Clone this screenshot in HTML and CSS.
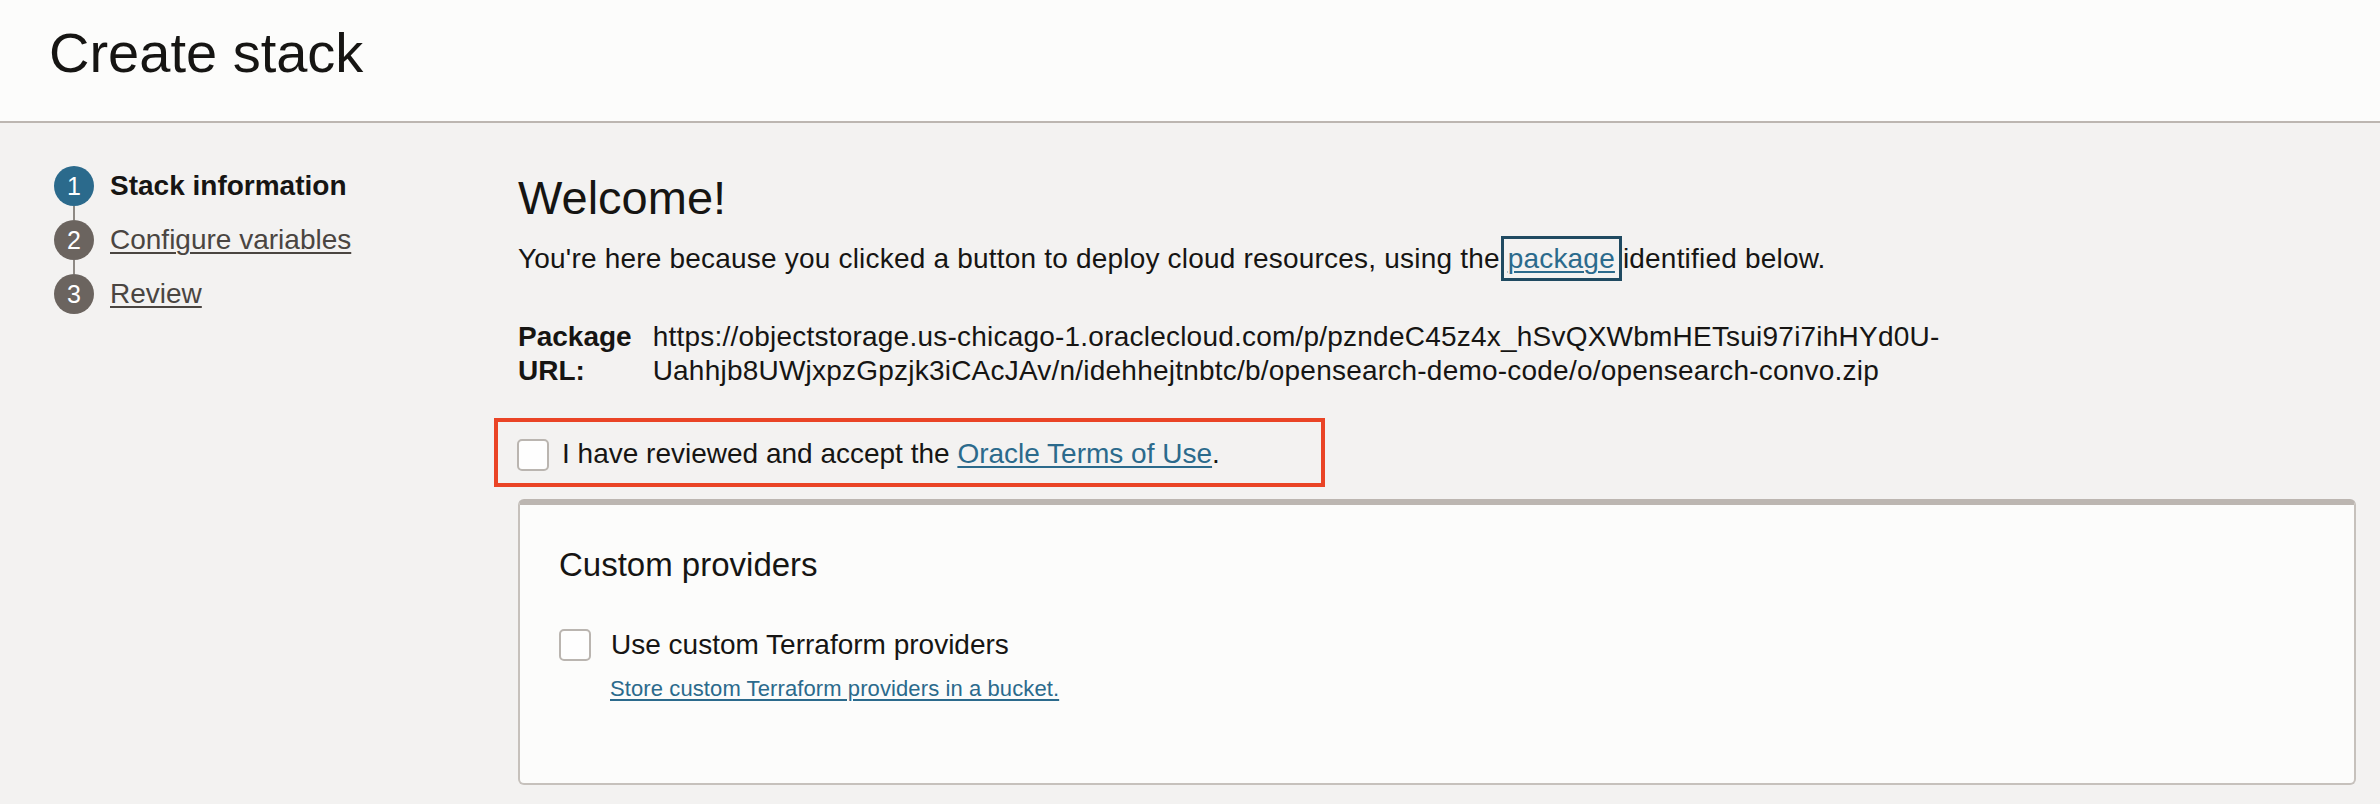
FILE: index.html
```html
<!DOCTYPE html>
<html lang="en">
<head>
<meta charset="utf-8">
<title>Create stack</title>
<link rel="stylesheet" href="styles.css">
</head>
<body>
<header class="page-header">
  <h1 class="page-title">Create stack</h1>
</header>
<div class="layout">
  <nav class="steps">
    <div class="step active"><span class="step-num">1</span><span class="step-label">Stack information</span></div>
    <div class="step-line"></div>
    <div class="step"><span class="step-num">2</span><a class="step-label" href="#">Configure variables</a></div>
    <div class="step-line"></div>
    <div class="step"><span class="step-num">3</span><a class="step-label" href="#">Review</a></div>
  </nav>
  <main class="main">
    <h2 class="welcome">Welcome!</h2>
    <p class="intro">You're here because you clicked a button to deploy cloud resources, using the <a class="link focused" href="#">package</a> identified below.</p>
    <div class="pkg">
      <div class="pkg-label">Package<br>URL:</div>
      <div class="pkg-value">https://objectstorage.us-chicago-1.oraclecloud.com/p/pzndeC45z4x_hSvQXWbmHETsui97i7ihHYd0U-<br>Uahhjb8UWjxpzGpzjk3iCAcJAv/n/idehhejtnbtc/b/opensearch-demo-code/o/opensearch-convo.zip</div>
    </div>
    <div class="highlight">
      <label class="check-row">
        <span class="checkbox"></span>
        <span class="check-text">I have reviewed and accept the <a class="link" href="#">Oracle Terms of Use</a>.</span>
      </label>
    </div>
    <section class="card">
      <h3 class="card-title">Custom providers</h3>
      <label class="check-row card-check">
        <span class="checkbox"></span>
        <span class="check-text">Use custom Terraform providers</span>
      </label>
      <a class="link small-link" href="#">Store custom Terraform providers in a bucket.</a>
    </section>
  </main>
</div>
</body>
</html>
```

FILE: styles.css
```css
* { box-sizing: border-box; }
html, body { margin: 0; padding: 0; }
body {
  background: #f3f2f1;
  color: #161513;
  font-family: "Liberation Sans", Arial, Helvetica, sans-serif;
  width: 2380px;
  height: 804px;
  overflow: hidden;
}
.page-header {
  background: #fcfcfb;
  padding: 21px 49px 36px;
  border-bottom: 2px solid #bcb6b1;
}
.page-title {
  margin: 0;
  font-size: 56px;
  line-height: 64px;
  font-weight: 400;
}
.layout {
  display: grid;
  grid-template-columns: 518px 1fr;
}
.steps {
  padding: 43px 0 0 54px;
  display: flex;
  flex-direction: column;
}
.step {
  display: flex;
  align-items: center;
  gap: 16px;
  height: 40px;
}
.step-num {
  width: 40px;
  height: 40px;
  border-radius: 50%;
  background: #6b645f;
  color: #fff;
  font-size: 25px;
  display: flex;
  align-items: center;
  justify-content: center;
  flex: none;
}
.step.active .step-num { background: #2b6a8c; }
.step-label {
  font-size: 28px;
  color: #4a4541;
  text-decoration: underline;
  text-underline-offset: 3px;
  text-decoration-thickness: 2px;
}
.step.active .step-label {
  color: #161513;
  font-weight: 700;
  text-decoration: none;
}
.step-line {
  width: 2px;
  height: 14px;
  margin-left: 19px;
  background: #8e8984;
}
.main {
  padding: 47px 24px 0 0;
}
.welcome {
  margin: 0;
  font-size: 47px;
  line-height: 56px;
  font-weight: 400;
}
.intro {
  margin: 16px 0 0;
  font-size: 28px;
  line-height: 34px;
  letter-spacing: 0.2px;
}
.link {
  color: #2b6a8c;
  text-decoration: underline;
  text-underline-offset: 3px;
  text-decoration-thickness: 2px;
}
.focused {
  outline: 3px solid #1f4a61;
  outline-offset: 4px;
}
.pkg {
  margin-top: 44px;
  display: grid;
  grid-template-columns: auto 1fr;
  column-gap: 21px;
  font-size: 28px;
  line-height: 34px;
}
.pkg-label { font-weight: 700; }
.pkg-value { letter-spacing: 0.22px; }
.highlight {
  margin: 30px 0 0 -24px;
  width: 831px;
  border: 4px solid #ea4426;
  padding: 15px 19px 12px;
}
.check-row {
  display: flex;
  align-items: center;
  gap: 13px;
  font-size: 28px;
  line-height: 34px;
}
.checkbox {
  width: 32px;
  height: 32px;
  border: 2px solid #bab5b0;
  border-radius: 5px;
  background: #fefefe;
  flex: none;
}
.highlight .checkbox { margin-top: 2px; }
.card {
  margin-top: 12px;
  background: #fcfcfb;
  border: 2px solid #c6c1bc;
  border-top: 6px solid #bcb6b1;
  border-radius: 6px;
  padding: 40px 39px 80px;
  height: 286px;
}
.card-title {
  margin: 0;
  font-size: 33px;
  line-height: 40px;
  font-weight: 400;
}
.card-check {
  margin-top: 43px;
  gap: 20px;
}
.small-link {
  display: inline-block;
  margin: 13px 0 0 51px;
  font-size: 22px;
  line-height: 28px;
  letter-spacing: 0.1px;
  text-decoration-thickness: 2px;
}
```
